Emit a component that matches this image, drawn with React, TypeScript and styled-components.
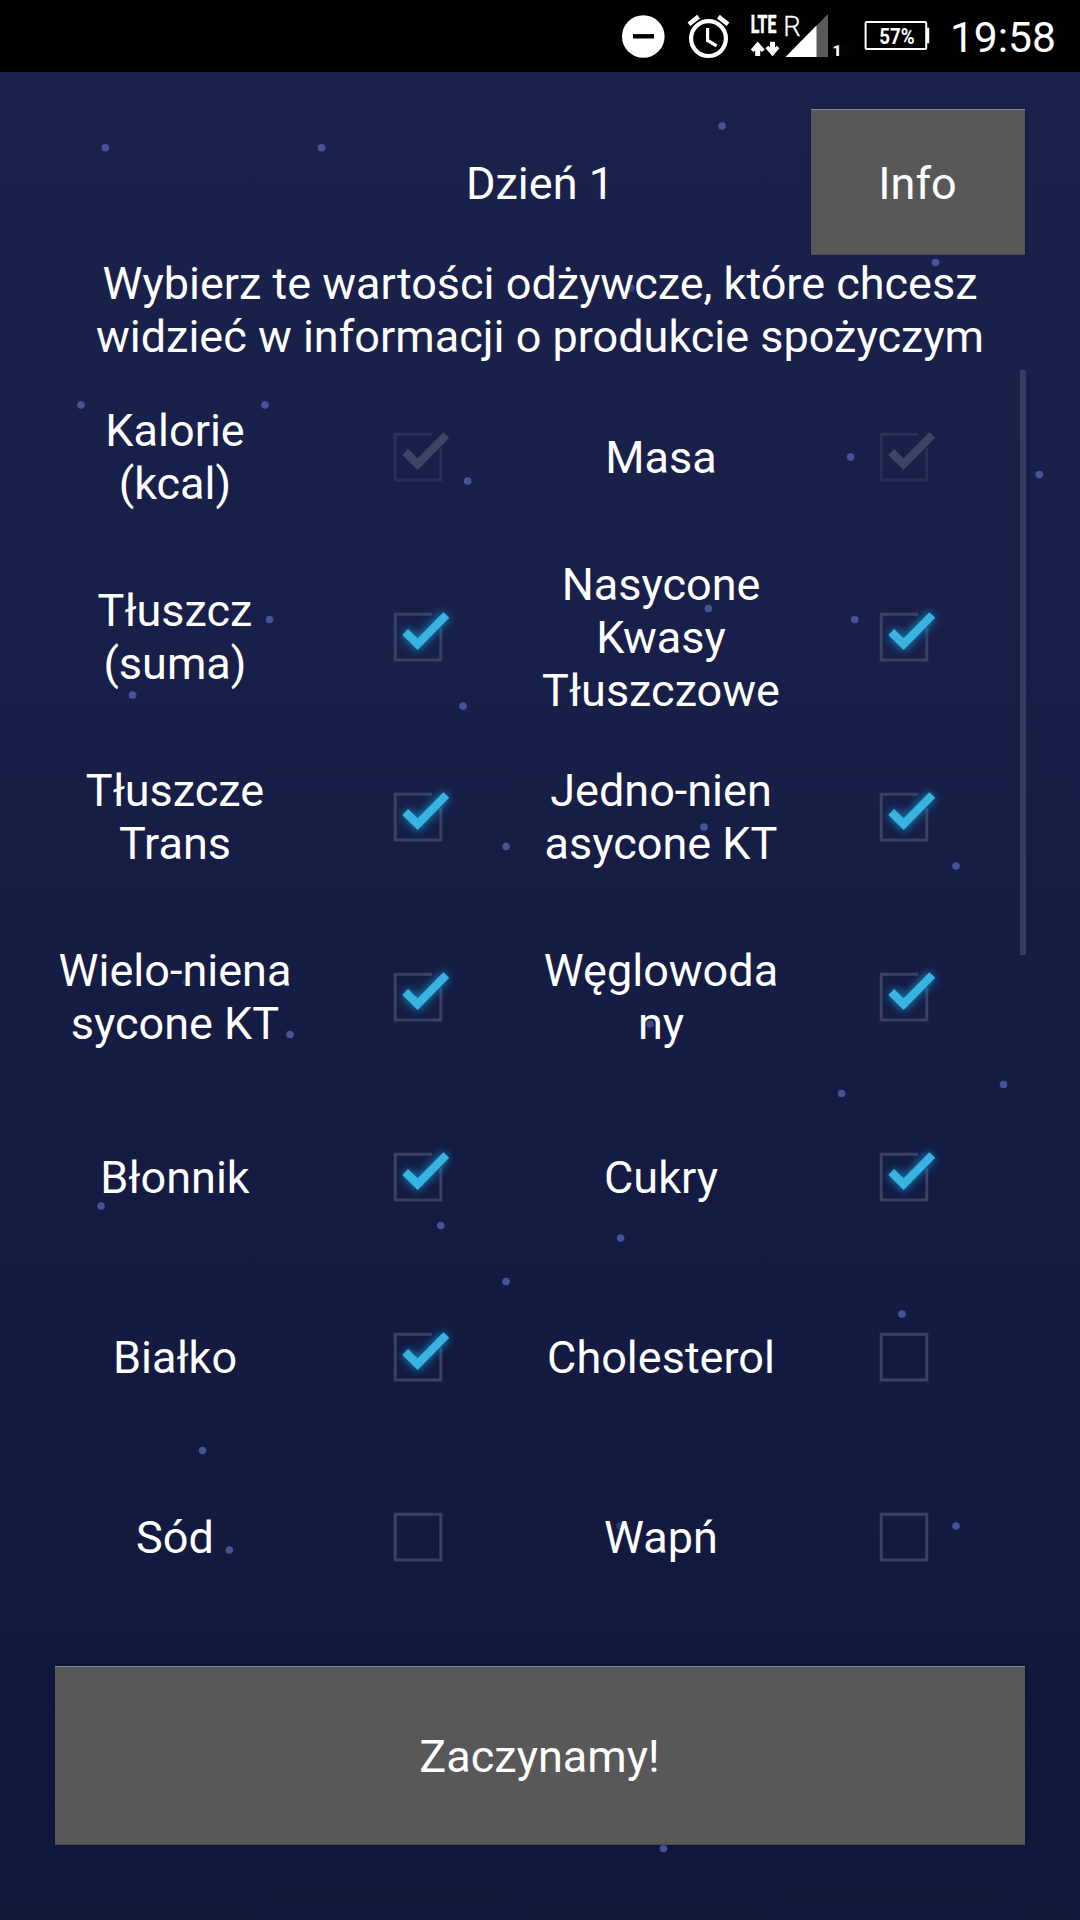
import React, { useState } from 'react';
import styled, { createGlobalStyle } from 'styled-components';

const GlobalStyle = createGlobalStyle`
  *, *::before, *::after { box-sizing: border-box; }
  html, body { margin: 0; padding: 0; background: #12183c; }
`;

const Screen = styled.div`
  position: relative;
  display: flex;
  flex-direction: column;
  width: 1080px;
  height: 1920px;
  overflow: hidden;
  color: #fff;
  font-family: Roboto, 'Liberation Sans', sans-serif;
  font-size: 45px;
  line-height: 53px;
  background: linear-gradient(#1a224c 72px, #182049 620px, #151b42 1100px, #11183c 1920px);
`;

const StarField = styled.svg`
  position: absolute;
  inset: 0;
  width: 100%;
  height: 100%;
  fill: #45549a;
`;

const StatusBar = styled.header`
  position: relative;
  display: flex;
  justify-content: flex-end;
  align-items: center;
  height: 72px;
  padding-right: 24px;
  background: #000;
`;

const StatusIcon = styled.svg<{ $gap: number }>`
  flex: none;
  height: 72px;
  margin-right: ${(p) => p.$gap}px;
  font-family: Roboto, 'Liberation Sans', sans-serif;
`;

const Clock = styled.time`
  width: 108px;
  padding-top: 1px;
  font-size: 42.6px;
  line-height: 72px;
  text-align: right;
  white-space: nowrap;
`;

const Content = styled.main`
  position: relative;
  flex: 1;
  display: flex;
  flex-direction: column;
  padding: 37px 55px 75px;
`;

const TopRow = styled.div`
  display: grid;
  grid-template-columns: 214px 1fr 214px;
  align-items: center;
  height: 146px;
`;

const Title = styled.h1`
  grid-column: 2;
  margin: 0;
  padding-top: 2px;
  font: inherit;
  text-align: center;
`;

const Button = styled.button<{ $height: number }>`
  flex: none;
  width: 100%;
  height: ${(p) => p.$height}px;
  padding: 2px 1px 0 0;
  border: 0;
  border-top: 1px solid #85879a;
  border-bottom: 1px solid #4a4b55;
  background: #585858;
  color: inherit;
  font: inherit;
  box-shadow: 0 0 3px rgba(5, 10, 30, 0.5);
`;

const Prompt = styled.p`
  margin: 2px 0 4px;
  text-align: center;
  white-space: pre-line;
`;

const ScrollArea = styled.section`
  position: relative;
  flex: 1;
`;

const ScrollThumb = styled.div`
  position: absolute;
  top: 3px;
  right: -1px;
  width: 6px;
  height: 585px;
  background: #343c60;
`;

const Nutrients = styled.div`
  display: grid;
  grid-template-columns: 240px 246px 240px 1fr;
  grid-auto-rows: 180px;
  align-items: center;
`;

const NutrientName = styled.span`
  text-align: center;
  white-space: pre-line;
`;

const CheckButton = styled.button`
  justify-self: start;
  width: 96px;
  height: 96px;
  margin-left: 75px;
  padding: 0;
  border: 0;
  background: none;
`;

const CheckDrawing = styled.svg`
  display: block;
  fill: none;
`;

const STARS: [number, number, number?][] = [
  [105.4, 147.7], [321.6, 147.7], [722, 126], [935.5, 262.5], [631, 288, 0.6],
  [81, 405], [265, 405], [467.6, 481], [269.6, 619.5], [132.6, 695], [463, 706],
  [850.6, 457], [1039.3, 474.5], [708.4, 608.5], [854.7, 619.5],
  [506, 846.5], [704, 827], [956, 866], [290, 1034.5], [650, 1024, 0.8], [186, 982, 0.4],
  [841.6, 1093.5], [1003.5, 1084.5], [101, 1206], [440.8, 1225.5], [620.6, 1238],
  [506, 1281.5], [902, 1314], [202.5, 1450.5], [229.4, 1550], [956, 1526],
  [620, 1526, 0.5], [663.5, 1848.5],
];

type Nutrient = { name: string; checked: boolean; disabled?: boolean };

const NUTRIENTS: Nutrient[] = [
  { name: 'Kalorie\n(kcal)', checked: true, disabled: true },
  { name: 'Masa', checked: true, disabled: true },
  { name: 'Tłuszcz\n(suma)', checked: true },
  { name: 'Nasycone\nKwasy\nTłuszczowe', checked: true },
  { name: 'Tłuszcze\nTrans', checked: true },
  { name: 'Jedno-nien\nasycone KT', checked: true },
  { name: 'Wielo-niena\nsycone KT', checked: true },
  { name: 'Węglowoda\nny', checked: true },
  { name: 'Błonnik', checked: true },
  { name: 'Cukry', checked: true },
  { name: 'Białko', checked: true },
  { name: 'Cholesterol', checked: false },
  { name: 'Sód', checked: false },
  { name: 'Wapń', checked: false },
];

function CheckMark({ checked, disabled }: { checked: boolean; disabled?: boolean }) {
  const tick = 'M35.2 43L47.6 55.2L76.3 26';
  return (
    <CheckDrawing width="96" height="96" viewBox="0 0 96 96">
      <defs>
        <filter id="glow" x="0" y="0" width="96" height="96" filterUnits="userSpaceOnUse">
          <feGaussianBlur stdDeviation="4.5" />
        </filter>
      </defs>
      <path
        d={checked ? 'M62 25.2H25.2V71H70.8V39' : 'M25.2 25.2H70.8V71H25.2Z'}
        stroke={disabled ? '#2a3157' : '#3a4064'}
        strokeWidth="3"
      />
      {checked && !disabled && (
        <path d={tick} stroke="#128cc4" strokeWidth="11" opacity="0.8" filter="url(#glow)" />
      )}
      {checked && <path d={tick} stroke={disabled ? '#3d4464' : '#39b3e2'} strokeWidth="8.2" />}
    </CheckDrawing>
  );
}

function StatusIcons() {
  return (
    <>
      <StatusIcon $gap={22} width="44" viewBox="621 0 44 72">
        <circle cx="643.3" cy="36.5" r="21.3" fill="#fff" />
        <path d="M633 36.3H654" stroke="#000" strokeWidth="4.4" />
      </StatusIcon>
      <StatusIcon $gap={20} width="43" viewBox="687 0 43 72" fill="none" stroke="#fff">
        <circle cx="708.5" cy="38.6" r="17.4" strokeWidth="4.2" />
        <path d="M707.6 28V40.5L716.6 45.8" strokeWidth="3.2" />
        <path d="M689 24.3L698.6 16.6M718.4 16.6L728 24.3" strokeWidth="4.6" />
      </StatusIcon>
      <StatusIcon $gap={24} width="90" viewBox="750 0 90 72" fill="#fff">
        <text
          transform="translate(750.8 33.4) scale(0.62 1)"
          fontSize="25.5"
          fontWeight="700"
          stroke="#fff"
          strokeWidth="0.7"
        >
          LTE
        </text>
        <text transform="translate(783.2 35.7) scale(1.02 1)" fontSize="27" fontWeight="300" stroke="#fff" strokeWidth="0.3">R</text>
        <path d="M757.7 41.5L764.6 49.5L762 52L760.2 50.4V56H755.2V50.4L753.4 52L750.8 49.5Z" />
        <path d="M772.5 56.3L779.4 48.3L776.8 45.8L775 47.4V41.8H770V47.4L768.2 45.8L765.6 48.3Z" />
        <path d="M785.5 57L828 14V57Z" fill="#5a5a5a" />
        <path d="M785.5 57L816.5 25.6V57Z" />
        <text x="832.5" y="56" fontSize="15.5" fontWeight="900">1</text>
      </StatusIcon>
      <StatusIcon $gap={18} width="66" viewBox="864 0 66 72">
        <rect x="865.6" y="22" width="60.6" height="27" rx="1" fill="none" stroke="#fff" strokeWidth="2" />
        <path d="M927 27.7H929.2V43.3H927Z" fill="#fff" />
        <text transform="translate(879.2 44) scale(0.86 1)" fontSize="21.8" fontWeight="700" fill="#fff">57%</text>
      </StatusIcon>
    </>
  );
}

export default function App() {
  const [items, setItems] = useState(NUTRIENTS);
  const toggle = (index: number) =>
    setItems((prev) => prev.map((it, i) => (i === index ? { ...it, checked: !it.checked } : it)));

  return (
    <>
      <GlobalStyle />
      <Screen>
        <StarField viewBox="0 0 1080 1920">
          {STARS.map(([x, y, opacity = 1]) => (
            <circle key={`${x}-${y}`} cx={x} cy={y} r="3.8" opacity={opacity} />
          ))}
        </StarField>
        <StatusBar>
          <StatusIcons />
          <Clock>19:58</Clock>
        </StatusBar>
        <Content>
          <TopRow>
            <Title>Dzień 1</Title>
            <Button $height={146}>Info</Button>
          </TopRow>
          <Prompt>{'Wybierz te wartości odżywcze, które chcesz\nwidzieć w informacji o produkcie spożyczym'}</Prompt>
          <ScrollArea>
            <Nutrients>
              {items.map((item, i) => (
                <React.Fragment key={item.name}>
                  <NutrientName>{item.name}</NutrientName>
                  <CheckButton
                    role="checkbox"
                    aria-checked={item.checked}
                    disabled={item.disabled}
                    onClick={() => toggle(i)}
                  >
                    <CheckMark checked={item.checked} disabled={item.disabled} />
                  </CheckButton>
                </React.Fragment>
              ))}
            </Nutrients>
            <ScrollThumb />
          </ScrollArea>
          <Button $height={179}>Zaczynamy!</Button>
        </Content>
      </Screen>
    </>
  );
}
